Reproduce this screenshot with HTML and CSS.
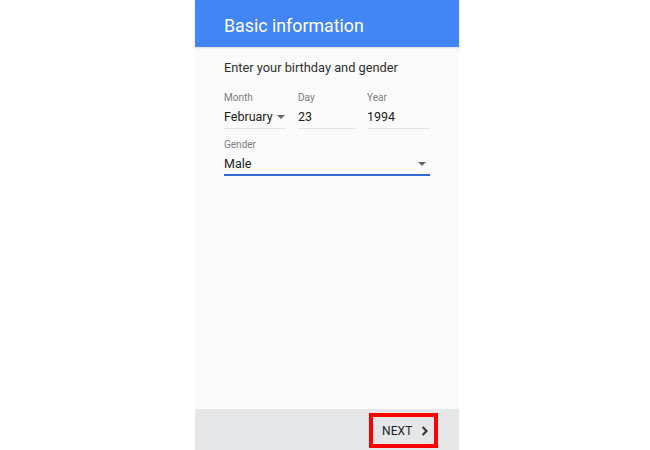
FILE: index.html
```html
<!DOCTYPE html>
<html lang="en">
<head>
<meta charset="utf-8">
<title>Basic information</title>
<link rel="stylesheet" href="styles.css">
</head>
<body>
<div class="phone">
  <header class="appbar">Basic information</header>
  <main class="content">
    <p class="intro">Enter your birthday and gender</p>
    <div class="date-row">
      <div class="field field-month">
        <div class="label">Month</div>
        <div class="value"><span>February</span><span class="caret"></span></div>
      </div>
      <div class="field field-day">
        <div class="label">Day</div>
        <div class="value">23</div>
      </div>
      <div class="field field-year">
        <div class="label">Year</div>
        <div class="value">1994</div>
      </div>
    </div>
    <div class="field field-gender">
      <div class="label">Gender</div>
      <div class="value value-select"><span>Male</span><span class="caret"></span></div>
    </div>
  </main>
  <footer class="bottombar">
    <button class="next-btn" type="button">
      <span>NEXT</span>
      <svg class="chevron" width="8" height="10" viewBox="0 0 8 10" aria-hidden="true">
        <path d="M1.6 1 L5.6 5 L1.6 9" fill="none" stroke="#333" stroke-width="2"/>
      </svg>
    </button>
  </footer>
</div>
</body>
</html>
```

FILE: styles.css
```css
* { box-sizing: border-box; }

html, body {
  margin: 0;
  padding: 0;
  background: #ffffff;
}

body {
  font-family: Roboto, "Noto Sans", "Liberation Sans", sans-serif;
  color: #212121;
}

.phone {
  width: 264px;
  height: 450px;
  margin-left: 195px;
  display: flex;
  flex-direction: column;
  background: #fafafa;
}

.appbar {
  height: 47px;
  flex: none;
  background: #4285f4;
  color: #ffffff;
  font-size: 17.8px;
  line-height: 21px;
  padding: 15px 0 0 29px;
  box-shadow: 0 1px 2px rgba(0, 0, 0, 0.12);
  position: relative;
  z-index: 1;
}

.content {
  flex: 1;
  padding: 13px 29px 0 29px;
  background: #fafafa;
}

.intro {
  margin: 0;
  font-size: 12.8px;
  line-height: 16px;
  color: #303030;
}

.date-row {
  display: flex;
  gap: 12px;
  margin-top: 16px;
}

.field-month { width: 62px; }
.field-day { width: 57px; }
.field-year { width: 63px; }

.label {
  font-size: 10px;
  line-height: 12px;
  color: #7d7d7d;
}

.value {
  margin-top: 5px;
  font-size: 12.5px;
  line-height: 16px;
  padding-bottom: 3px;
  border-bottom: 1px solid #e4e4e4;
  display: flex;
  align-items: center;
  color: #212121;
}

.caret {
  width: 0;
  height: 0;
  margin-left: 4px;
  border-left: 4.5px solid transparent;
  border-right: 4.5px solid transparent;
  border-top: 4.5px solid #666666;
}

.field-gender {
  margin-top: 10px;
}

.value-select {
  margin-top: 5px;
  justify-content: space-between;
  padding-bottom: 2px;
  border-bottom: 2px solid #3367d6;
}

.value-select .caret {
  margin-right: 4px;
}

.bottombar {
  height: 41px;
  flex: none;
  background: #e4e6e7;
  display: flex;
  justify-content: flex-end;
  align-items: flex-start;
  padding: 4px 21px 0 0;
}

.next-btn {
  width: 69px;
  height: 35px;
  border: 4px solid #ff0000;
  background: transparent;
  padding: 1px 5px 0 9px;
  margin: 0;
  display: flex;
  align-items: center;
  justify-content: space-between;
  font-family: Roboto, "Noto Sans", "Liberation Sans", sans-serif;
  font-size: 12px;
  color: #222222;
  letter-spacing: 0.1px;
}

.chevron {
  display: block;
}
```
